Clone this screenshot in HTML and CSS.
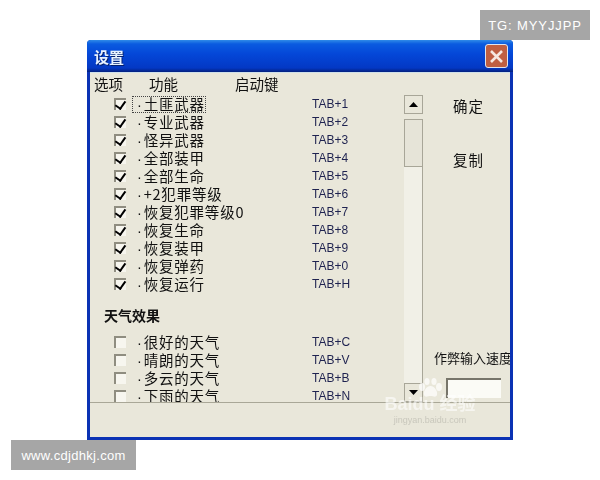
FILE: index.html
```html
<!DOCTYPE html>
<html lang="zh-CN">
<head>
<meta charset="utf-8">
<title>设置</title>
<link rel="stylesheet" href="styles.css">
</head>
<body>
<div class="stage">
  <div class="badge badge-top">TG: MYYJJPP</div>
  <section class="window">
    <header class="titlebar">
      <span class="title">设置</span>
      <button class="close" aria-label="关闭">
        <svg width="17" height="17" viewBox="0 0 17 17"><path d="M3 3L14 14M14 3L3 14" stroke="#f6e8e0" stroke-width="2.6" fill="none"/></svg>
      </button>
    </header>
    <div class="client">
      <div class="main">
        <div class="left">
          <div class="columns">
            <span class="col-a">选项</span><span class="col-b">功能</span><span class="col-c">启动键</span>
          </div>
          <div class="listpane">
            <div class="list">
              <div class="row first"><i class="box on"></i><span class="name"><b class="dot">·</b>土匪武器</span><span class="key">TAB+1</span></div>
              <div class="row"><i class="box on"></i><span class="name"><b class="dot">·</b>专业武器</span><span class="key">TAB+2</span></div>
              <div class="row"><i class="box on"></i><span class="name"><b class="dot">·</b>怪异武器</span><span class="key">TAB+3</span></div>
              <div class="row"><i class="box on"></i><span class="name"><b class="dot">·</b>全部装甲</span><span class="key">TAB+4</span></div>
              <div class="row"><i class="box on"></i><span class="name"><b class="dot">·</b>全部生命</span><span class="key">TAB+5</span></div>
              <div class="row"><i class="box on"></i><span class="name"><b class="dot">·</b>+2犯罪等级</span><span class="key">TAB+6</span></div>
              <div class="row"><i class="box on"></i><span class="name"><b class="dot">·</b>恢复犯罪等级0</span><span class="key">TAB+7</span></div>
              <div class="row"><i class="box on"></i><span class="name"><b class="dot">·</b>恢复生命</span><span class="key">TAB+8</span></div>
              <div class="row"><i class="box on"></i><span class="name"><b class="dot">·</b>恢复装甲</span><span class="key">TAB+9</span></div>
              <div class="row"><i class="box on"></i><span class="name"><b class="dot">·</b>恢复弹药</span><span class="key">TAB+0</span></div>
              <div class="row"><i class="box on"></i><span class="name"><b class="dot">·</b>恢复运行</span><span class="key">TAB+H</span></div>
              <div class="group">天气效果</div>
              <div class="row"><i class="box"></i><span class="name"><b class="dot">·</b>很好的天气</span><span class="key">TAB+C</span></div>
              <div class="row"><i class="box"></i><span class="name"><b class="dot">·</b>晴朗的天气</span><span class="key">TAB+V</span></div>
              <div class="row"><i class="box"></i><span class="name"><b class="dot">·</b>多云的天气</span><span class="key">TAB+B</span></div>
              <div class="row"><i class="box"></i><span class="name"><b class="dot">·</b>下雨的天气</span><span class="key">TAB+N</span></div>
            </div>
            <div class="scrollbar">
              <div class="sb-btn"><svg width="9" height="5" viewBox="0 0 9 5"><path d="M4.5 0L9 5H0Z" fill="#000"/></svg></div>
              <div class="sb-thumb"></div>
              <div class="sb-track"></div>
              <div class="sb-btn"><svg width="9" height="5" viewBox="0 0 9 5"><path d="M0 0H9L4.5 5Z" fill="#000"/></svg></div>
            </div>
          </div>
        </div>
        <aside class="side">
          <div class="action first-action">确定</div>
          <div class="action">复制</div>
          <div class="speed">
            <div class="speed-label">作弊输入速度</div>
            <div class="speed-input"></div>
          </div>
        </aside>
      </div>
      <footer class="status"></footer>
    </div>
    <div class="watermark">
      <svg class="wm-paw" width="26" height="20" viewBox="0 0 26 20"><g fill="#fff" fill-opacity=".7"><ellipse cx="5" cy="9" rx="3" ry="4"/><ellipse cx="10" cy="3.5" rx="2.6" ry="3.5"/><ellipse cx="17" cy="3.5" rx="2.6" ry="3.5"/><ellipse cx="22" cy="9" rx="3" ry="4"/><path d="M13.5 8C9 8 6 14 7 17C8 20 11 18 13.5 18C16 18 19 20 20 17C21 14 18 8 13.5 8Z"/></g></svg>
      <span class="wm-brand">Baidu 经验</span>
      <span class="wm-url">jingyan.baidu.com</span>
    </div>
  </section>
  <div class="badge badge-bottom">www.cdjdhkj.com</div>
</div>
</body>
</html>
```

FILE: styles.css
```css
* { box-sizing: border-box; }
html, body { margin: 0; padding: 0; background: #fff; }
.stage {
  position: relative;
  width: 600px;
  height: 480px;
  overflow: hidden;
  font-family: "Noto Sans CJK SC", "Liberation Sans", sans-serif;
}
.badge {
  position: absolute;
  height: 30px;
  background: #a6a6a6;
  color: #fff;
  display: flex;
  align-items: center;
  justify-content: center;
  font-family: "Liberation Sans", sans-serif;
  font-size: 13px;
}
.badge-top { left: 480px; top: 10px; width: 110px; letter-spacing: 0.9px; }
.badge-bottom { left: 11px; top: 440px; width: 125px; letter-spacing: 0.3px; }

.window {
  position: absolute;
  left: 87px;
  top: 40px;
  width: 426px;
  height: 400px;
  display: flex;
  flex-direction: column;
  background: #0b32b4;
  border-radius: 4px 4px 0 0;
  overflow: hidden;
  filter: blur(0.3px);
}
.titlebar {
  height: 32px;
  flex: none;
  padding: 0 5px 0 7px;
  display: flex;
  align-items: center;
  justify-content: space-between;
  background: linear-gradient(#2f8be8 0, #0a5be0 4px, #0447d8 14px, #0338c4 28px, #04207e 32px);
}
.title {
  color: #e8f2ff;
  font-size: 15px;
  font-weight: 700;
  line-height: 1;
  text-shadow: 1px 1px 0 #04206e;
}
.close {
  width: 23px;
  height: 24px;
  padding: 0;
  border: 1px solid #dfe4ee;
  border-radius: 3px;
  background: #bf5f42;
  display: flex;
  align-items: center;
  justify-content: center;
}
.client {
  flex: 1;
  margin: 0 3px 3px;
  display: flex;
  flex-direction: column;
  background: #e9e7da;
  border-top: 1px solid #cfe0ea;
  min-height: 0;
}
.main { height: 329px; display: flex; flex: none; }
.left { width: 333px; flex: none; display: flex; flex-direction: column; }
.columns {
  height: 22px;
  flex: none;
  padding-left: 4px;
  display: flex;
  align-items: center;
  font-size: 14.5px;
  line-height: 1;
  color: #111;
}
.col-a { width: 55px; }
.col-b { width: 86px; }
.listpane { height: 307px; display: flex; overflow: hidden; }
.list { width: 314px; flex: none; padding-left: 24px; overflow: hidden; }
.row { height: 18px; display: flex; align-items: center; }
.box {
  width: 12px;
  height: 12px;
  flex: none;
  background: #f7f6ef;
  border-top: 2px solid #8f8d80;
  border-left: 2px solid #8f8d80;
  position: relative;
}
.box.on::after {
  content: "";
  position: absolute;
  left: 1px;
  top: -1px;
  width: 5px;
  height: 8px;
  border: solid #000;
  border-width: 0 2px 2px 0;
  transform: rotate(35deg);
}
.name {
  margin-left: 7px;
  padding-left: 4px;
  font-size: 14.5px;
  letter-spacing: 0.8px;
  line-height: 14px;
  color: #111;
  white-space: nowrap;
}
.dot {
  font-family: "Liberation Sans", sans-serif;
  font-weight: 400;
  margin-right: 1px;
}
.row.first .name { outline: 1px dotted #444; }
.key {
  width: 92px;
  margin-left: auto;
  font-family: "Liberation Sans", sans-serif;
  font-size: 12px;
  color: #1f2350;
  white-space: nowrap;
}
.group {
  height: 18px;
  margin: 13px 0 9px -10px;
  font-size: 14px;
  font-weight: 700;
  line-height: 18px;
  color: #111;
}
.scrollbar { width: 19px; flex: none; display: flex; flex-direction: column; }
.sb-btn {
  height: 19px;
  flex: none;
  background: #e9e7da;
  border: 1px solid #a8a698;
  display: flex;
  align-items: center;
  justify-content: center;
}
.sb-thumb { height: 48px; flex: none; margin-top: 5px; background: #e6e4d8; border: 1px solid #a8a698; }
.sb-track { flex: 1; background: #f1f0e7; border-right: 1px solid #a8a698; }
.side { flex: 1; min-width: 0; display: flex; flex-direction: column; overflow: hidden; position: relative; }
.action {
  margin-left: 30px;
  font-size: 14.5px;
  letter-spacing: 1px;
  line-height: 20px;
  color: #111;
}
.first-action { margin-top: 23px; margin-bottom: 34px; }
.speed { margin-top: auto; padding: 0 0 4px 11px; }
.speed-label { font-size: 13px; line-height: 16px; white-space: nowrap; color: #111; margin-bottom: 12px; }
.speed-input {
  width: 55px;
  height: 20px;
  margin-left: 12px;
  background: #fbfbf6;
  border-top: 2px solid #77756a;
  border-left: 2px solid #77756a;
}
.status { flex: 1; border-top: 1px solid #a9a797; }
.watermark {
  position: absolute;
  left: 293px;
  top: 338px;
  width: 100px;
  display: flex;
  flex-direction: column;
  align-items: center;
  color: rgba(255, 255, 255, 0.6);
  font-family: "Liberation Sans", "Noto Sans CJK SC", sans-serif;
  line-height: 1;
}
.wm-paw { margin-bottom: -3px; }
.wm-brand { font-size: 18px; font-weight: 700; white-space: nowrap; }
.wm-url { font-size: 9px; margin-top: 3px; color: rgba(190, 188, 178, 0.75); }
```
